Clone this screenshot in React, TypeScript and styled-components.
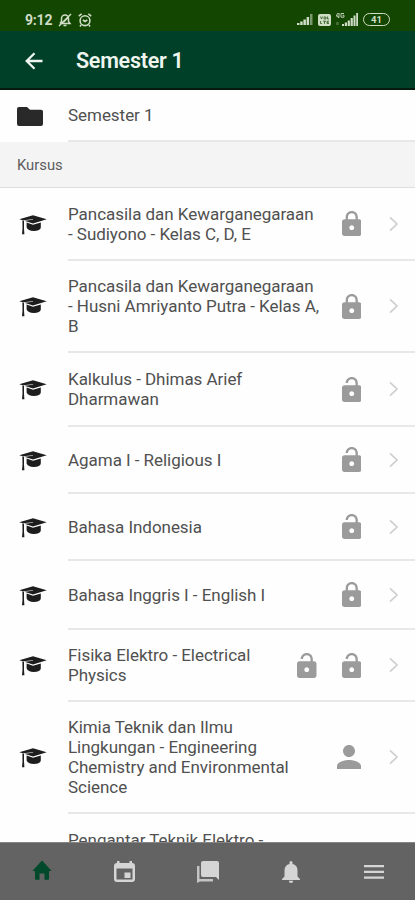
import React from 'react';
import styled, { createGlobalStyle } from 'styled-components';

const GlobalStyle = createGlobalStyle`
  * { box-sizing: border-box; }
  html, body { margin: 0; padding: 0; background: #fff; overflow: hidden; }
  body { font-family: Roboto, "Liberation Sans", sans-serif; }
`;

const Screen = styled.div`
  width: 415px;
  height: 900px;
  display: flex;
  flex-direction: column;
  overflow: hidden;
  background: #fefefe;
`;

const StatusBar = styled.div`
  flex: none;
  height: 31px;
  display: flex;
  align-items: center;
  justify-content: space-between;
  padding: 8px 25px 0 25px;
  background: #134600;
  color: #cfdcc6;
`;

const StatusGroup = styled.div<{ $gap: number }>`
  display: flex;
  align-items: center;
  gap: ${({ $gap }) => $gap}px;
  svg { display: block; }
`;

const Clock = styled.span`
  font-size: 14px;
  line-height: 16px;
  font-weight: 700;
  letter-spacing: -0.2px;
`;

const Header = styled.header`
  flex: none;
  height: 59px;
  display: flex;
  align-items: center;
  padding: 2px 0 0 25px;
  background: #004028;
  border-bottom: 2px solid #071a10;
  color: #eef5ef;
  svg { display: block; }
`;

const Title = styled.h1`
  margin: 0 0 0 33px;
  font-size: 21.5px;
  line-height: 28px;
  font-weight: 600;
  letter-spacing: -0.25px;
`;

const Content = styled.main`
  flex: 1;
  min-height: 0;
  overflow: hidden;
`;

const Row = styled.div<{ $height: number }>`
  height: ${({ $height }) => $height}px;
  display: flex;
  svg { display: block; }
`;

const Leading = styled.div<{ $inset: number }>`
  flex: none;
  width: 68px;
  padding-left: ${({ $inset }) => $inset}px;
  display: flex;
  align-items: center;
  color: #1d1d1d;
`;

const RowBody = styled.div`
  flex: 1;
  display: flex;
  align-items: center;
  padding-right: 16px;
  border-bottom: 2px solid #e8e8e8;
`;

const Label = styled.div`
  flex: 1;
  font-size: 17px;
  line-height: 20px;
  letter-spacing: -0.04px;
  color: #505050;
  white-space: pre;
`;

const Trailing = styled.div`
  display: flex;
  align-items: center;
  gap: 25px;
  margin-right: 28px;
  color: #9b9b9b;
`;

const Section = styled.div`
  height: 46px;
  padding: 0 17px;
  display: flex;
  align-items: center;
  background: #f4f4f4;
  border-bottom: 1px solid #dedede;
  color: #5c5c5c;
  font-size: 14.8px;
`;

const TabBar = styled.nav`
  flex: none;
  height: 58px;
  display: grid;
  grid-template-columns: repeat(5, 1fr);
  background: #636363;
  border-top: 1px solid #858585;
`;

const Tab = styled.div<{ $active?: boolean }>`
  display: flex;
  align-items: center;
  justify-content: center;
  padding-bottom: ${({ $active }) => ($active ? 3 : 0)}px;
  color: ${({ $active }) => ($active ? '#004a2b' : '#d5d5d5')};
  svg { display: block; }
`;

type Access = 'lock' | 'unlock' | 'person';

const LockIcon = ({ open }: { open: boolean }) => (
  <svg width="19.5" height="25" viewBox="4 1 16 21" fill="currentColor" preserveAspectRatio="none">
    <path
      d={
        open
          ? 'M18 8H17V6C17 3.24 14.76 1 12 1S7 3.24 7 6H8.9C8.9 4.29 10.29 2.9 12 2.9S15.1 4.29 15.1 6V8H6C4.9 8 4 8.9 4 10V20C4 21.1 4.9 22 6 22H18C19.1 22 20 21.1 20 20V10C20 8.9 19.1 8 18 8ZM12 17C10.9 17 10 16.1 10 15S10.9 13 12 13S14 13.9 14 15S13.1 17 12 17Z'
          : 'M18 8H17V6C17 3.24 14.76 1 12 1S7 3.24 7 6V8H6C4.9 8 4 8.9 4 10V20C4 21.1 4.9 22 6 22H18C19.1 22 20 21.1 20 20V10C20 8.9 19.1 8 18 8ZM12 17C10.9 17 10 16.1 10 15S10.9 13 12 13S14 13.9 14 15S13.1 17 12 17ZM15.1 8H8.9V6C8.9 4.29 10.29 2.9 12 2.9S15.1 4.29 15.1 6V8Z'
      }
    />
  </svg>
);

const PersonIcon = () => (
  <svg width="24" height="24" viewBox="4 4 16 16" fill="currentColor">
    <path d="M12 12c2.2 0 4-1.8 4-4s-1.8-4-4-4-4 1.8-4 4 1.8 4 4 4zm0 2c-2.7 0-8 1.3-8 4v2h16v-2c0-2.700-5.300-4-8-4z" />
  </svg>
);

const CapIcon = () => (
  <svg width="28" height="20" viewBox="0 0 28 20" fill="currentColor">
    <path d="M14 .3 27.700 4.200 14 8.400 5.400 5.800 14 4.800V4.200L3.800 5.300.3 4.200z" />
    <path d="M3.400 5.200 5 5.700V13.500L5.400 19.300H3L3.500 13.500z" />
    <path d="M7.600 7.600 14 9.700 21.800 7.400V12.500Q21.400 15.900 14.700 15.900 9 15.900 7.600 12.500z" />
  </svg>
);

const Chevron = () => (
  <svg width="10" height="16" viewBox="0 0 10 16" fill="none" stroke="#cfcfcf" strokeWidth="1.700">
    <path d="M1 1.300 8 8 1 14.700" />
  </svg>
);

const icons: Record<Access, React.ReactNode> = {
  lock: <LockIcon open={false} />,
  unlock: <LockIcon open />,
  person: <PersonIcon />,
};

const courses: { title: string; height: number; access: Access[] }[] = [
  { title: 'Pancasila dan Kewarganegaraan\n- Sudiyono - Kelas C, D, E', height: 73, access: ['lock'] },
  { title: 'Pancasila dan Kewarganegaraan\n- Husni Amriyanto Putra - Kelas A,\nB', height: 92, access: ['lock'] },
  { title: 'Kalkulus - Dhimas Arief\nDharmawan', height: 74, access: ['unlock'] },
  { title: 'Agama I - Religious I', height: 67, access: ['unlock'] },
  { title: 'Bahasa Indonesia', height: 67, access: ['unlock'] },
  { title: 'Bahasa Inggris I - English I', height: 69, access: ['lock'] },
  { title: 'Fisika Elektro - Electrical\nPhysics', height: 72, access: ['unlock', 'unlock'] },
  { title: 'Kimia Teknik dan Ilmu\nLingkungan - Engineering\nChemistry and Environmental\nScience', height: 112, access: ['person'] },
];

const NextLabel = styled(Label)`
  padding: 16px 0 0 68px;
`;

const Signal = () => (
  <svg width="16" height="11" viewBox="0 0 16 11" fill="currentColor">
    <path d="M0 9h2.500v2H0zM3.200 7.500h2.500V11H3.200zM6.400 5.500h2.500V11H6.400zM9.600 3h2.500v8H9.600z" />
    <path d="M13 0h2.500v11H13z" opacity=".55" />
  </svg>
);

const MutedBell = () => (
  <svg width="14" height="14" viewBox="0 0 14 14" fill="none" stroke="currentColor" strokeWidth="1.500">
    <path d="M2 10.500h10L10.500 8.500V5.500a3.500 3.500 0 0 0-7 0v3L2 10.500M5.500 12.500h3M1 13 13 1M5.600 9l4-4" />
  </svg>
);

const Alarm = () => (
  <svg width="14" height="14" viewBox="0 0 14 14" fill="none" stroke="currentColor" strokeWidth="1.600">
    <circle cx="7" cy="7.700" r="4.900" />
    <path d="M.8 3.200 3.600.9M13.200 3.200 10.400.9M4.800 7l2.200 1.500L9.300 7M3 12l-1 1.500M11 12l1 1.500" />
  </svg>
);

const Volte = () => (
  <svg width="13" height="12" viewBox="0 0 13 12">
    <rect width="13" height="12" rx="2" fill="currentColor" />
    <path d="M2.500 2.500l1 2.500 1-2.500M6 3h2v2H6zM9.500 2.500v2.500h1.500M2.500 7v2.500H4M5 7.200h3M6.500 7v3M11 7.200H9v2.300h2M9 8.400h1.700" fill="none" stroke="#315b20" strokeWidth=".8" />
  </svg>
);

const MobileSignal = () => (
  <svg width="22" height="13" viewBox="0 0 22 13" fill="currentColor">
    <path d="M2 0 0 3h2v1.500h1V0zM8 .5H5v3.700h3V2.300H6.700" fill="none" stroke="currentColor" strokeWidth=".9" />
    <path d="M6 11h2v2H6zM8.800 9.500h2.200V13H8.800zM11.700 7.500h2.200V13h-2.200zM14.600 5h2.200v8h-2.200zM17.500 2.500h2V13h-2zM20.200 0H22v13h-1.800z" />
    <path d="M0 9h3v3H0z" opacity=".25" />
  </svg>
);

const Battery = styled.div`
  width: 27px;
  height: 13px;
  border: 1.5px solid currentColor;
  border-radius: 6.5px;
  display: flex;
  align-items: center;
  justify-content: center;
  font-size: 9.5px;
  line-height: 10px;
  font-weight: 700;
`;

export default function App() {
  return (
    <>
      <GlobalStyle />
      <Screen>
        <StatusBar>
          <StatusGroup $gap={6}>
            <Clock>9:12</Clock>
            <MutedBell />
            <Alarm />
          </StatusGroup>
          <StatusGroup $gap={5}>
            <Signal />
            <Volte />
            <MobileSignal />
            <Battery>41</Battery>
          </StatusGroup>
        </StatusBar>
        <Header>
          <svg width="18" height="18" viewBox="0 0 18 18" fill="none" stroke="currentColor" strokeWidth="2.300">
            <path d="M17.500 9H2M9.500 1.200 1.700 9l7.800 7.800" />
          </svg>
          <Title>Semester 1</Title>
        </Header>
        <Content>
          <Row $height={52}>
            <Leading $inset={17}>
              <svg width="26" height="19" viewBox="0 0 26 20" preserveAspectRatio="none" fill="#292929">
                <path d="M2 0h8L13 2.800h11Q26 2.800 26 4.800v13.200Q26 20 24 20H2Q0 20 0 18v-16Q0 0 2 0z" />
              </svg>
            </Leading>
            <RowBody><Label>Semester 1</Label></RowBody>
          </Row>
          <Section>Kursus</Section>
          {courses.map(course => (
            <Row key={course.title} $height={course.height}>
              <Leading $inset={19}><CapIcon /></Leading>
              <RowBody>
                <Label>{course.title}</Label>
                <Trailing>
                  {course.access.map((kind, i) => <React.Fragment key={i}>{icons[kind]}</React.Fragment>)}
                </Trailing>
                <Chevron />
              </RowBody>
            </Row>
          ))}
          <NextLabel>Pengantar Teknik Elektro -</NextLabel>
        </Content>
        <TabBar>
          <Tab $active>
            <svg width="20" height="20" viewBox="0 0 20 20" fill="currentColor">
              <path d="M3 19V11H.3L10 .5 19.700 11H17v8q0 .8-.8.8h-3.700V13.500h-5v6.300H3.800Q3 19.800 3 19z" />
            </svg>
          </Tab>
          <Tab>
            <svg width="21" height="21" viewBox="0 0 21 21" fill="currentColor" fillRule="evenodd">
              <path d="M3 0h2.500v2h10V0H18v2q3 0 3 3v13q0 3-3 3H3q-3 0-3-3V5q0-3 3-3zM2.500 7.500v11h16v-11zM10.500 11.500h6v5.500h-6z" />
            </svg>
          </Tab>
          <Tab>
            <svg width="22" height="22" viewBox="0 0 22 22" fill="currentColor">
              <path d="M6 0h14q2 0 2 2v17l-3-3H6q-2 0-2-2V2q0-2 2-2z" />
              <path d="M0 5h2.500v13H16v2.500H3L0 22z" opacity=".85" />
            </svg>
          </Tab>
          <Tab>
            <svg width="18" height="22" viewBox="0 0 18 22" fill="currentColor">
              <path d="M9 22q2.200 0 2.200-2.200H6.800Q6.800 22 9 22zM15.500 15.500V9.500q0-5.300-5-6.500V1.500a1.500 1.500 0 0 0-3 0V3q-5 1.200-5 6.500v6L0 18v1h18v-1z" />
            </svg>
          </Tab>
          <Tab>
            <svg width="20" height="14" viewBox="0 0 20 14" fill="currentColor">
              <path d="M0 0h20v2.300H0zM0 5.700h20V8H0zM0 11.400h20v2.300H0z" />
            </svg>
          </Tab>
        </TabBar>
      </Screen>
    </>
  );
}
